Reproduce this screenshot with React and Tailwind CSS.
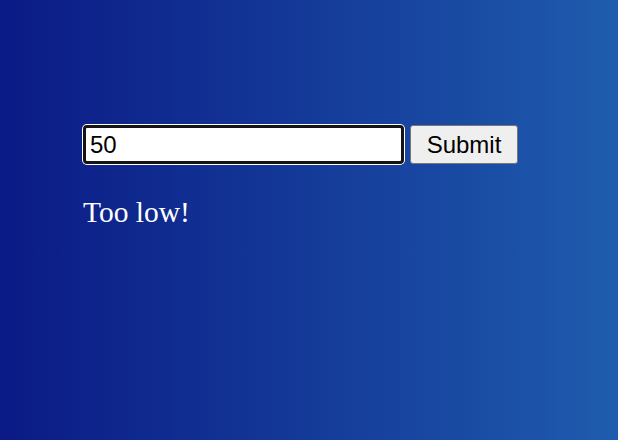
export default function App() {
    return (
        <div className="min-h-[440px] w-full bg-[linear-gradient(to_right,#0b1a86,#143a98_50%,#1f5cae)] px-[83px] pt-[125px]">
            <form className="flex items-center gap-[6px]" onSubmit={(event) => event.preventDefault()}>
                <input
                    type="text"
                    defaultValue="50"
                    className="h-[39px] w-[321px] rounded-[4px] border-[3px] border-[#141414] bg-white pl-[4px] pr-[3px] font-['Liberation_Sans',Arial,sans-serif] text-[24px] text-black shadow-[0_0_0_1px_#ffffff] outline-none"
                />
                <button
                    type="submit"
                    className="h-[39px] w-[108px] rounded-[3px] border border-[#767676] bg-[#efefef] font-['Liberation_Sans',Arial,sans-serif] text-[24px] leading-none text-black"
                >
                    Submit
                </button>
            </form>
            <p className="mt-[32px] font-['Liberation_Serif','Times_New_Roman',serif] text-[29.5px] leading-[33px] text-white">
                Too low!
            </p>
        </div>
    );
}
